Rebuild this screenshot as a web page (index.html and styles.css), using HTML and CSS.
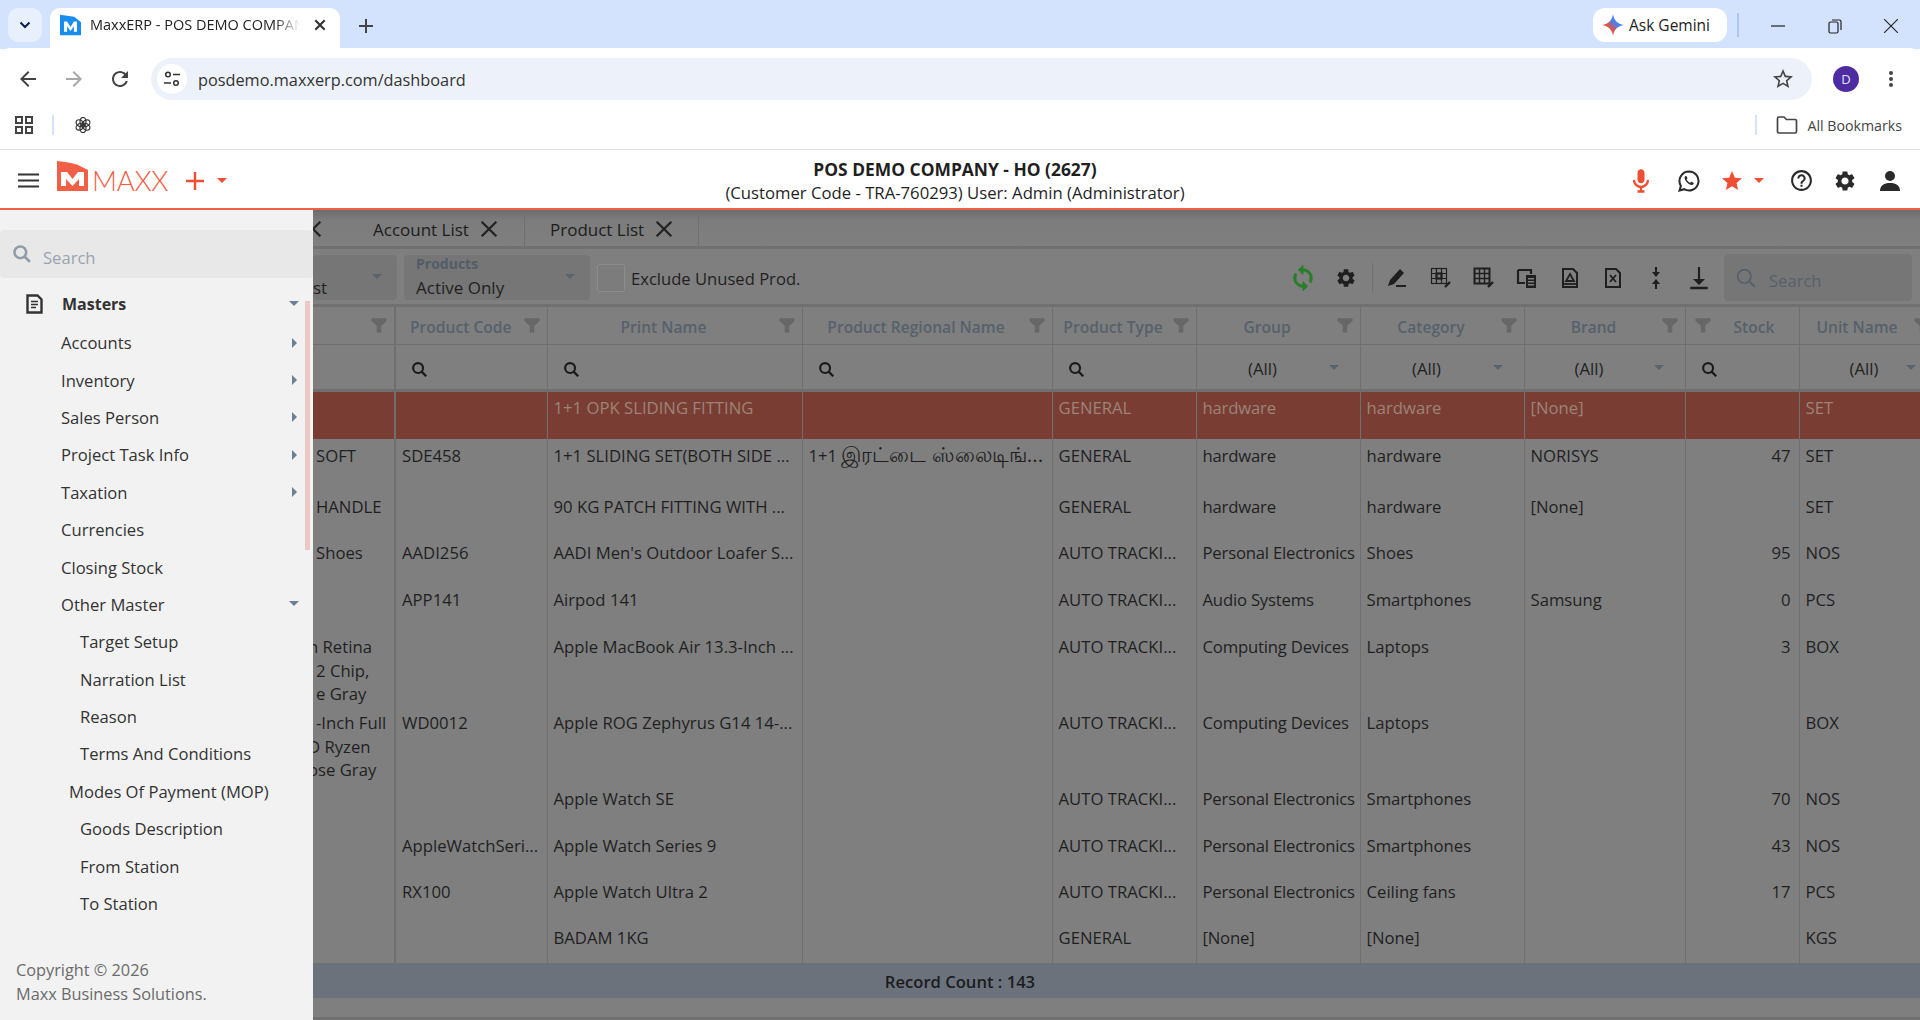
FILE: index.html
```html
<!DOCTYPE html>
<html lang="en">
<head>
    <meta charset="UTF-8">
    <title>MaxxERP - POS DEMO COMPANY</title>
    <link rel="stylesheet" href="styles.css">
</head>
<body>
    <svg class="sprite" xmlns="http://www.w3.org/2000/svg">
        <symbol id="i-filter" viewBox="0 0 24 24"><path d="M2 3h20v4l-7 6v9H9v-9L2 7z"/></symbol>
        <symbol id="i-search" viewBox="0 0 24 24"><circle cx="10" cy="10" r="7" fill="none" stroke="currentColor" stroke-width="3"/><path d="M15 15l6.500 6.500" fill="none" stroke="currentColor" stroke-width="3.200"/></symbol>
        <symbol id="i-search-thin" viewBox="0 0 24 24"><circle cx="10" cy="10" r="8" fill="none" stroke="currentColor" stroke-width="2"/><path d="M16 16l6.500 6.500" fill="none" stroke="currentColor" stroke-width="2.400"/></symbol>
        <symbol id="i-gear" viewBox="0 0 24 24"><path d="M19.140 12.940c.04-.3.06-.61.06-.94 0-.32-.02-.64-.07-.94l2.030-1.580c.18-.14.23-.41.12-.61l-1.920-3.320c-.12-.22-.37-.29-.59-.22l-2.390.96c-.5-.38-1.030-.7-1.620-.94l-.36-2.540c-.04-.24-.24-.41-.48-.41h-3.840c-.24 0-.43.17-.47.41l-.36 2.540c-.59.24-1.130.57-1.620.94l-2.390-.96c-.22-.08-.47 0-.59.22L2.740 8.870c-.12.21-.08.47.12.61l2.030 1.580c-.05.3-.09.63-.09.94s.02.64.07.94l-2.030 1.580c-.18.14-.23.41-.12.61l1.920 3.320c.12.22.37.29.59.22l2.390-.96c.5.38 1.030.7 1.620.94l.36 2.540c.05.24.24.41.48.41h3.840c.24 0 .44-.17.47-.41l.36-2.540c.59-.24 1.130-.56 1.620-.94l2.390.96c.22.08.47 0 .59-.22l1.920-3.320c.12-.22.07-.47-.12-.61l-2.010-1.580zM12 15.600c-1.980 0-3.600-1.620-3.600-3.600s1.620-3.600 3.600-3.600 3.600 1.620 3.600 3.600-1.620 3.600-3.600 3.600z"/></symbol>
        <symbol id="i-star" viewBox="0 0 24 24"><path d="M12 17.270L18.180 21l-1.640-7.030L22 9.240l-7.190-.61L12 2 9.190 8.630 2 9.240l5.460 4.730L5.820 21z"/></symbol>
        <symbol id="i-close" viewBox="0 0 24 24"><path d="M4 4l16 16M20 4L4 20" fill="none" stroke="currentColor" stroke-width="2.400"/></symbol>
    </svg>

    <div class="tab-strip">
        <button class="tab-menu"><svg width="16" height="16" viewBox="0 0 16 16"><path d="M3.500 5.500L8 10l4.500-4.500" fill="none" stroke="#0b1f4d" stroke-width="2"/></svg></button>
        <div class="browser-tab">
            <svg class="favicon" width="21" height="24" viewBox="0 0 31 30"><path d="M0 0l21 3 10 8v19H0z" fill="#1a8cf0"/><path d="M6 25V10h4.500l5 8 5-8H25v15h-4.500v-8l-5 7-5-7v8z" fill="#fff"/></svg>
            <span class="tab-title">MaxxERP - POS DEMO COMPANY - HO</span>
            <svg class="tab-x" width="14" height="14" viewBox="0 0 24 24"><path d="M4 4l16 16M20 4L4 20" fill="none" stroke="#333" stroke-width="3.600"/></svg>
        </div>
        <svg class="new-tab" width="16" height="16" viewBox="0 0 16 16"><path d="M8 1v14M1 8h14" stroke="#444" stroke-width="2"/></svg>
        <div class="strip-gap"></div>
        <div class="gemini">
            <svg width="22" height="24" viewBox="0 0 24 24">
                <defs><linearGradient id="spark" x1="0" y1="1" x2="1" y2="0"><stop offset="0" stop-color="#f2a33a"/><stop offset=".35" stop-color="#e8503f"/><stop offset=".6" stop-color="#4a7ff0"/><stop offset="1" stop-color="#35a5f5"/></linearGradient></defs>
                <path d="M12 0c1 7 5 11 12 12-7 1-11 5-12 12-1-7-5-11-12-12 7-1 11-5 12-12z" fill="url(#spark)"/>
            </svg>
            Ask Gemini
        </div>
        <div class="strip-divider"></div>
        <div class="win-btns">
            <svg width="14" height="14" viewBox="0 0 14 14"><path d="M0 7h14" stroke="#222" stroke-width="1.200"/></svg>
            <svg width="14" height="16" viewBox="0 0 14 16"><rect x="1" y="4" width="9" height="11" rx="1.500" fill="none" stroke="#222" stroke-width="1.200"/><path d="M4 2h7.500a1.500 1.500 0 0 1 1.500 1.500V12" fill="none" stroke="#222" stroke-width="1.200"/></svg>
            <svg width="14" height="14" viewBox="0 0 14 14"><path d="M0 0l14 14M14 0L0 14" stroke="#222" stroke-width="1.100"/></svg>
        </div>
    </div>

    <div class="browser-bar">
        <svg class="nav-btn" width="24" height="24" viewBox="0 0 24 24"><path fill="#444" d="M20 11H7.830l5.590-5.590L12 4l-8 8 8 8 1.410-1.410L7.830 13H20v-2z"/></svg>
        <svg class="nav-btn" width="24" height="24" viewBox="0 0 24 24"><path fill="#a8a8a8" d="M4 11h12.170l-5.590-5.590L12 4l8 8-8 8-1.410-1.410L16.170 13H4v-2z"/></svg>
        <svg class="nav-btn" width="24" height="24" viewBox="0 0 24 24"><path fill="#444" d="M17.650 6.350C16.200 4.900 14.210 4 12 4c-4.420 0-7.990 3.580-7.990 8s3.570 8 7.990 8c3.730 0 6.840-2.550 7.730-6h-2.080c-.82 2.330-3.040 4-5.650 4-3.310 0-6-2.690-6-6s2.690-6 6-6c1.660 0 3.140.69 4.220 1.780L13 11h7V4l-2.350 2.350z"/></svg>
        <div class="omnibox">
            <span class="site-icon"><svg width="18" height="18" viewBox="0 0 18 18"><circle cx="5" cy="4.500" r="2.300" fill="none" stroke="#333" stroke-width="1.500"/><path d="M10 4.500h7M1 13h7" stroke="#333" stroke-width="1.500"/><circle cx="13" cy="13" r="2.300" fill="none" stroke="#333" stroke-width="1.500"/></svg></span>
            <span class="url">posdemo.maxxerp.com/dashboard</span>
            <svg class="omni-star" width="24" height="24" viewBox="0 0 24 24"><path fill="#444" d="M22 9.240l-7.190-.62L12 2 9.190 8.630 2 9.240l5.460 4.730L5.820 21 12 17.270 18.180 21l-1.630-7.030L22 9.240zM12 15.400l-3.760 2.270 1-4.280-3.320-2.880 4.380-.38L12 6.100l1.710 4.040 4.380.38-3.320 2.880 1 4.280L12 15.400z"/></svg>
        </div>
        <span class="avatar">D</span>
        <svg class="kebab" width="6" height="18" viewBox="0 0 6 18"><circle cx="3" cy="3" r="2" fill="#444"/><circle cx="3" cy="9" r="2" fill="#444"/><circle cx="3" cy="15" r="2" fill="#444"/></svg>
    </div>

    <div class="bookmark-bar">
        <svg width="18" height="18" viewBox="0 0 18 18" fill="none" stroke="#444" stroke-width="2"><rect x="1" y="1" width="6" height="6"/><rect x="11" y="1" width="6" height="6"/><rect x="1" y="11" width="6" height="6"/><rect x="11" y="11" width="6" height="6"/></svg>
        <span class="bm-divider"></span>
        <svg class="openai" width="16" height="16" viewBox="0 0 24 24" fill="none" stroke="#333" stroke-width="1.800">
            <ellipse cx="12" cy="7" rx="4.500" ry="6.500"/>
            <ellipse cx="12" cy="7" rx="4.500" ry="6.500" transform="rotate(60 12 12)"/>
            <ellipse cx="12" cy="7" rx="4.500" ry="6.500" transform="rotate(120 12 12)"/>
            <ellipse cx="12" cy="7" rx="4.500" ry="6.500" transform="rotate(180 12 12)"/>
            <ellipse cx="12" cy="7" rx="4.500" ry="6.500" transform="rotate(240 12 12)"/>
            <ellipse cx="12" cy="7" rx="4.500" ry="6.500" transform="rotate(300 12 12)"/>
        </svg>
        <div class="strip-gap"></div>
        <span class="bm-divider"></span>
        <svg class="bm-folder" width="22" height="20" viewBox="0 0 22 20"><path d="M1.500 3.500a1.500 1.500 0 0 1 1.500-1.500h5l2.500 2.500H19a1.500 1.500 0 0 1 1.500 1.500v10.500a1.500 1.500 0 0 1-1.500 1.500H3a1.500 1.500 0 0 1-1.500-1.500z" fill="none" stroke="#444" stroke-width="1.700"/></svg>
        <span class="bm-label">All Bookmarks</span>
    </div>

    <header class="app-header">
        <div class="header-left">
            <svg class="hamburger" width="21" height="15" viewBox="0 0 21 15"><path d="M0 1.500h21M0 7.500h21M0 13.500h21" stroke="#333" stroke-width="2.200"/></svg>
            <svg class="logo-mark" width="31" height="30" viewBox="0 0 31 30"><path d="M0 0c8 1 15 2 20 3.500L31 9v21H0z" fill="#f25f47"/><path d="M4 25V11h6l5.500 7L21 11h6v14h-5v-7l-6.500 7L9 18v7z" fill="#fff"/></svg>
            <span class="logo-text">MAXX</span>
            <svg class="quick-add" width="20" height="20" viewBox="0 0 20 20"><path d="M10 1v18M1 10h18" stroke="#f04e30" stroke-width="2.400"/></svg>
            <span class="caret caret-red"></span>
        </div>
        <div class="header-title">
            <strong>POS DEMO COMPANY - HO (2627)</strong>
            <span>(Customer Code - TRA-760293) User: Admin (Administrator)</span>
        </div>
        <div class="header-right">
            <svg class="h-mic" width="28" height="30" viewBox="0 0 24 24"><path fill="#f04e30" d="M12 14c1.660 0 3-1.340 3-3V5c0-1.660-1.340-3-3-3S9 3.340 9 5v6c0 1.660 1.340 3 3 3zm5.910-3c-.49 0-.9.36-.98.85C16.520 14.200 14.470 16 12 16s-4.520-1.800-4.930-4.150c-.08-.49-.49-.85-.98-.85-.61 0-1.090.54-1 1.140.49 3 2.890 5.350 5.910 5.780V20H9v2h6v-2h-2v-2.080c3.020-.43 5.420-2.780 5.910-5.780.1-.6-.39-1.140-1-1.140z"/></svg>
            <svg class="h-wa" width="24" height="24" viewBox="0 0 24 24"><path d="M12 2.500a9.500 9.500 0 0 0-8.100 14.400L2.500 21.500l4.700-1.300A9.500 9.500 0 1 0 12 2.500z" fill="none" stroke="#2a2a2a" stroke-width="2"/><path fill="#2a2a2a" d="M8.800 7c-.4 0-.9.4-1.100 1-.4 1.100 0 2.800 1.700 4.800 1.800 2.100 3.800 3.200 5.200 3.200 1.100 0 1.900-.7 2.100-1.500.1-.4 0-.7-.2-.8l-2-1c-.3-.1-.5 0-.7.2l-.8 1c-1.100-.4-2.800-1.900-3.400-3.300l.7-.8c.2-.3.2-.5.1-.7l-.9-1.800C9.300 7.100 9.100 7 8.800 7z"/></svg>
            <svg class="h-star" width="24" height="24" fill="#f04e30"><use href="#i-star"/></svg>
            <span class="caret caret-red"></span>
            <svg class="h-help" width="25" height="25" viewBox="0 0 24 24"><path fill="#2a2a2a" d="M11 18h2v-2h-2v2zm1-16C6.480 2 2 6.480 2 12s4.480 10 10 10 10-4.480 10-10S17.520 2 12 2zm0 18c-4.410 0-8-3.590-8-8s3.590-8 8-8 8 3.590 8 8-3.590 8-8 8zm0-14c-2.210 0-4 1.790-4 4h2c0-1.100.9-2 2-2s2 .9 2 2c0 2-3 1.750-3 5h2c0-2.250 3-2.500 3-5 0-2.210-1.790-4-4-4z"/></svg>
            <svg class="h-gear" width="24" height="24" fill="#2a2a2a"><use href="#i-gear"/></svg>
            <svg class="h-user" width="22" height="22" viewBox="0 0 22 22" fill="#2a2a2a"><circle cx="11" cy="6" r="5"/><path d="M1 21c0-5.500 4-8 10-8s10 2.500 10 8z"/></svg>
        </div>
    </header>

    <div class="workspace">
        <aside class="sidebar">
            <div class="side-search">
                <svg width="20" height="20" color="#8f9ba6"><use href="#i-search"/></svg>
                <span>Search</span>
            </div>
            <div class="side-group">
                <svg class="doc-icon" width="17" height="20" viewBox="0 0 17 20"><path d="M1.500 1.500h10l4 4v13h-14z" fill="none" stroke="#333" stroke-width="2.400"/><path d="M5 7.500h7M5 10.500h7M5 13.500h5" stroke="#333" stroke-width="1.700"/></svg>
                Masters
                <span class="caret caret-down"></span>
            </div>
            <ul class="side-menu">
                <li>Accounts <span class="caret caret-right"></span></li>
                <li>Inventory <span class="caret caret-right"></span></li>
                <li>Sales Person <span class="caret caret-right"></span></li>
                <li>Project Task Info <span class="caret caret-right"></span></li>
                <li>Taxation <span class="caret caret-right"></span></li>
                <li>Currencies</li>
                <li>Closing Stock</li>
                <li>Other Master <span class="caret caret-down"></span></li>
                <li class="sub">Target Setup</li>
                <li class="sub">Narration List</li>
                <li class="sub">Reason</li>
                <li class="sub">Terms And Conditions</li>
                <li class="sub mop">Modes Of Payment (MOP)</li>
                <li class="sub">Goods Description</li>
                <li class="sub">From Station</li>
                <li class="sub">To Station</li>
            </ul>
            <div class="side-thumb"></div>
            <div class="copyright">Copyright © 2026<br>Maxx Business Solutions.</div>
        </aside>

        <main class="main">
            <div class="page-tabs">
                <svg class="cut-x" width="22" height="22" color="#222"><use href="#i-close"/></svg>
                <div class="page-tab tab-account">Account List <svg width="22" height="22" color="#222"><use href="#i-close"/></svg></div>
                <div class="page-tab tab-product">Product List <svg width="22" height="22" color="#222"><use href="#i-close"/></svg></div>
            </div>

            <div class="grid-toolbar">
                <div class="drop drop-cut"><span class="drop-value">st</span><span class="caret caret-dim"></span></div>
                <div class="drop drop-products">
                    <label>Products</label>
                    <span class="drop-value">Active Only</span>
                    <span class="caret caret-dim"></span>
                </div>
                <span class="check"></span>
                <span class="check-label">Exclude Unused Prod.</span>

                <div class="tool-icons">
                    <svg class="tool-refresh" viewBox="0 0 24 24"><path fill="#2a7d2a" stroke="#2a7d2a" stroke-width=".7" d="M12 4V1L8 5l4 4V6c3.310 0 6 2.690 6 6 0 1.010-.25 1.970-.7 2.800l1.460 1.460C19.540 15.030 20 13.570 20 12c0-4.420-3.580-8-8-8zm0 14c-3.310 0-6-2.690-6-6 0-1.010.25-1.970.7-2.800L5.240 7.740C4.460 8.970 4 10.430 4 12c0 4.420 3.580 8 8 8v3l4-4-4-4v3z"/></svg>
                    <svg fill="#1f1f1f"><use href="#i-gear"/></svg>
                    <span class="tool-divider"></span>
                    <svg class="tool-pen" viewBox="0 0 22 22"><path fill="#1f1f1f" d="M15 2l4 4-10 11-6 2 2-6zM11 18h10v2H11z"/></svg>
                    <svg viewBox="0 0 22 22" fill="none" stroke="#1f1f1f" stroke-width="1.200"><rect x="1.500" y="1.500" width="15" height="15"/><path d="M6.500 1.500v15M11.500 1.500v15M1.500 6.500h15M1.500 11.500h15"/><rect x="6.500" y="6.500" width="5" height="5" stroke-width="2.200"/><path d="M15 20l5-5" stroke-width="2.400"/></svg>
                    <svg viewBox="0 0 22 22" fill="none" stroke="#1f1f1f" stroke-width="1.400"><rect x="1.500" y="1.500" width="15" height="15" stroke-width="2"/><path d="M6.500 1.500v15M11.500 1.500v15M1.500 6.500h15M1.500 11.500h15"/><path d="M15 20l5-5" stroke-width="2.400"/></svg>
                    <svg viewBox="0 0 22 22"><path d="M2 3h13v4M9 16H2V3" fill="none" stroke="#1f1f1f" stroke-width="2.200"/><path fill="#1f1f1f" d="M10 8h10v13H10zM12 11v1.500h6V11zm0 3v1.500h6V14zm0 3v1.500h6V17z" fill-rule="evenodd"/></svg>
                    <svg viewBox="0 0 22 22"><path d="M4 2h10l4 4v14H4z" fill="none" stroke="#1f1f1f" stroke-width="2"/><path d="M11 7l4 7H7z" fill="none" stroke="#1f1f1f" stroke-width="1.800"/><path d="M4 17h14" stroke="#1f1f1f" stroke-width="1.800"/></svg>
                    <svg viewBox="0 0 22 22"><path d="M4 2h10l4 4v14H4z" fill="none" stroke="#1f1f1f" stroke-width="2"/><path d="M8 8l6 7M14 8l-6 7" stroke="#1f1f1f" stroke-width="1.800"/></svg>
                    <svg viewBox="0 0 14 24"><path fill="#1f1f1f" d="M6 1h2v5h3l-4 5-4-5h3zM7 13l4 5H8v5H6v-5H3z"/></svg>
                    <svg viewBox="0 0 20 22"><path fill="#1f1f1f" d="M9 1h2v11h4.500L10 17.500 4.500 12H9zM2 19h16v2.200H2z"/></svg>
                </div>
                <div class="tool-search">
                    <svg width="20" height="20" color="#56606a"><use href="#i-search-thin"/></svg>
                    <span>Search</span>
                </div>
            </div>

            <div class="grid-wrap">
                <table class="grid">
                    <colgroup>
                        <col class="c-name"><col class="c-code"><col class="c-print"><col class="c-regional"><col class="c-type">
                        <col class="c-group"><col class="c-cat"><col class="c-brand"><col class="c-stock"><col class="c-unit">
                    </colgroup>
                    <thead>
                        <tr class="head-row">
                            <th><svg class="th-filter"><use href="#i-filter"/></svg></th>
                            <th class="th-left">Product Code<svg class="th-filter"><use href="#i-filter"/></svg></th>
                            <th>Print Name<svg class="th-filter"><use href="#i-filter"/></svg></th>
                            <th>Product Regional Name<svg class="th-filter"><use href="#i-filter"/></svg></th>
                            <th>Product Type<svg class="th-filter"><use href="#i-filter"/></svg></th>
                            <th>Group<svg class="th-filter"><use href="#i-filter"/></svg></th>
                            <th>Category<svg class="th-filter"><use href="#i-filter"/></svg></th>
                            <th>Brand<svg class="th-filter"><use href="#i-filter"/></svg></th>
                            <th class="th-stock"><svg class="th-filter th-filter-left"><use href="#i-filter"/></svg>Stock</th>
                            <th>Unit Name<svg class="th-filter"><use href="#i-filter"/></svg></th>
                        </tr>
                        <tr class="filter-row">
                            <td></td>
                            <td><svg class="f-search"><use href="#i-search"/></svg></td>
                            <td><svg class="f-search"><use href="#i-search"/></svg></td>
                            <td><svg class="f-search"><use href="#i-search"/></svg></td>
                            <td><svg class="f-search"><use href="#i-search"/></svg></td>
                            <td class="f-all">(All)<span class="caret caret-dim"></span></td>
                            <td class="f-all">(All)<span class="caret caret-dim"></span></td>
                            <td class="f-all">(All)<span class="caret caret-dim"></span></td>
                            <td><svg class="f-search"><use href="#i-search"/></svg></td>
                            <td class="f-all f-unit">(All)<span class="caret caret-dim"></span></td>
                        </tr>
                    </thead>
                    <tbody>
                        <tr class="r49 selected"><td></td><td></td><td>1+1 OPK SLIDING FITTING</td><td></td><td>GENERAL</td><td>hardware</td><td>hardware</td><td>[None]</td><td></td><td>SET</td></tr>
                        <tr class="r51"><td>SOFT</td><td>SDE458</td><td>1+1 SLIDING SET(BOTH SIDE ...</td><td>1+1 <span class="tamil">இரட்டை ஸ்லைடிங்...</span></td><td>GENERAL</td><td>hardware</td><td>hardware</td><td>NORISYS</td><td class="num">47</td><td>SET</td></tr>
                        <tr class="r46"><td>HANDLE</td><td></td><td>90 KG PATCH FITTING WITH ...</td><td></td><td>GENERAL</td><td>hardware</td><td>hardware</td><td>[None]</td><td></td><td>SET</td></tr>
                        <tr class="r47"><td>Shoes</td><td>AADI256</td><td>AADI Men's Outdoor Loafer S...</td><td></td><td>AUTO TRACKI...</td><td>Personal Electronics</td><td>Shoes</td><td></td><td class="num">95</td><td>NOS</td></tr>
                        <tr class="r47"><td></td><td>APP141</td><td>Airpod 141</td><td></td><td>AUTO TRACKI...</td><td>Audio Systems</td><td>Smartphones</td><td>Samsung</td><td class="num">0</td><td>PCS</td></tr>
                        <tr class="r76"><td class="wrap-name"><span class="cut">n Retina</span><br>2 Chip,<br>e Gray</td><td></td><td>Apple MacBook Air 13.3-Inch ...</td><td></td><td>AUTO TRACKI...</td><td>Computing Devices</td><td>Laptops</td><td></td><td class="num">3</td><td>BOX</td></tr>
                        <tr class="r75"><td class="wrap-name">-Inch Full<br><span class="cut">D Ryzen</span><br><span class="cut">ose Gray</span></td><td>WD0012</td><td>Apple ROG Zephyrus G14 14-...</td><td></td><td>AUTO TRACKI...</td><td>Computing Devices</td><td>Laptops</td><td></td><td></td><td>BOX</td></tr>
                        <tr class="r47"><td></td><td></td><td>Apple Watch SE</td><td></td><td>AUTO TRACKI...</td><td>Personal Electronics</td><td>Smartphones</td><td></td><td class="num">70</td><td>NOS</td></tr>
                        <tr class="r46"><td></td><td>AppleWatchSeri...</td><td>Apple Watch Series 9</td><td></td><td>AUTO TRACKI...</td><td>Personal Electronics</td><td>Smartphones</td><td></td><td class="num">43</td><td>NOS</td></tr>
                        <tr class="r46"><td></td><td>RX100</td><td>Apple Watch Ultra 2</td><td></td><td>AUTO TRACKI...</td><td>Personal Electronics</td><td>Ceiling fans</td><td></td><td class="num">17</td><td>PCS</td></tr>
                        <tr class="r42"><td></td><td></td><td>BADAM 1KG</td><td></td><td>GENERAL</td><td>[None]</td><td>[None]</td><td></td><td></td><td>KGS</td></tr>
                    </tbody>
                </table>
            </div>

            <div class="record-count">Record Count : 143</div>
            <div class="pager-strip"></div>
        </main>
    </div>
</body>
</html>
```

FILE: styles.css
```css
* {
    margin: 0;
    padding: 0;
    box-sizing: border-box;
}

html, body {
    height: 100vh;
    overflow: hidden;
}

body {
    font-family: "Open Sans", "Noto Sans", sans-serif;
    font-size: 15px;
    color: #1f1f1f;
    background: #fff;
    display: flex;
    flex-direction: column;
}

svg {
    flex: none;
}

.sprite {
    display: none;
}

.caret {
    display: inline-block;
    width: 0;
    height: 0;
    border-left: 5px solid transparent;
    border-right: 5px solid transparent;
    border-top: 5px solid #6b7f95;
}

.caret-red {
    border-top-color: #f04e30;
}

.caret-dim {
    border-top-color: #5a646e;
}

/* browser chrome */
.tab-strip {
    height: 49px;
    background: #d3e3fd;
    display: flex;
    align-items: flex-start;
    padding: 8px 0 0 8px;
}

.tab-menu {
    width: 34px;
    height: 34px;
    background: #e8f0fe;
    border: 0;
    border-radius: 10px;
    display: flex;
    align-items: center;
    justify-content: center;
}

.browser-tab {
    width: 290px;
    height: 41px;
    margin-left: 8px;
    background: #fff;
    border-radius: 10px 10px 0 0;
    display: flex;
    align-items: center;
    padding: 0 0 8px 10px;
    font-size: 14.5px;
    color: #222;
}

.tab-title {
    width: 210px;
    margin-left: 9px;
    white-space: nowrap;
    overflow: hidden;
    -webkit-mask-image: linear-gradient(90deg, #000 88%, transparent);
    mask-image: linear-gradient(90deg, #000 88%, transparent);
}

.tab-x {
    margin-left: 13px;
}

.new-tab {
    margin: 10px 0 0 18px;
}

.strip-gap {
    flex: 1;
}

.gemini {
    width: 134px;
    height: 34px;
    background: #fff;
    border-radius: 12px;
    display: flex;
    align-items: center;
    gap: 5px;
    padding-left: 9px;
    font-size: 15.5px;
    font-weight: 500;
    color: #222;
}

.strip-divider {
    width: 2px;
    height: 24px;
    margin: 5px 0 0 10px;
    background: #a9c7fa;
}

.win-btns {
    width: 181px;
    display: flex;
    align-items: center;
    justify-content: space-between;
    padding: 10px 22px 0 32px;
}

.browser-bar {
    height: 56px;
    background: #fff;
    border-radius: 10px 10px 0 0;
    display: flex;
    align-items: center;
    padding: 6px 0 0 16px;
    margin-top: -1px;
}

.nav-btn {
    margin-right: 22px;
}

.omnibox {
    width: 1661px;
    height: 42px;
    margin-left: -3px;
    background: #edf2fa;
    border-radius: 21px;
    display: flex;
    align-items: center;
    padding: 0 17px 0 6px;
}

.site-icon {
    width: 30px;
    height: 30px;
    background: #fff;
    border-radius: 50%;
    display: flex;
    align-items: center;
    justify-content: center;
}

.url {
    flex: 1;
    margin: 1px 0 0 11px;
    font-size: 16.3px;
    color: #333;
}

.avatar {
    width: 26px;
    height: 26px;
    margin-left: 21px;
    background: #4c2ca0;
    border-radius: 50%;
    color: #e6e0f5;
    font-size: 13px;
    display: flex;
    align-items: center;
    justify-content: center;
}

.kebab {
    margin-left: 29px;
}

.bookmark-bar {
    height: 46px;
    background: #fff;
    border-bottom: 1px solid #e0e0e0;
    display: flex;
    align-items: center;
    padding: 0 18px 3px 15px;
}

.bm-divider {
    width: 2px;
    height: 20px;
    margin-left: 19px;
    background: #d3e3fd;
}

.openai {
    margin-left: 21px;
}

.bm-folder {
    margin-left: 19px;
}

.bm-label {
    margin-left: 9px;
    font-size: 14.2px;
    color: #444;
}

/* app header */
.app-header {
    height: 60px;
    background: #fff;
    border-bottom: 2px solid #f25f47;
    display: flex;
    align-items: center;
    padding-top: 3px;
}

.header-left {
    width: 400px;
    display: flex;
    align-items: center;
    padding-left: 18px;
}

.logo-mark {
    margin: -9px 0 0 18px;
}

.logo-text {
    margin-left: 4px;
    font-family: "Lato", sans-serif;
    font-weight: 300;
    font-size: 27.5px;
    color: #f25f47;
    letter-spacing: -0.3px;
}

.quick-add {
    margin-left: 17px;
}

.header-left .caret {
    margin-left: 12px;
}

.header-title {
    width: 1110px;
    text-align: center;
    line-height: 24px;
    font-size: 16.7px;
}

.header-title strong,
.header-title span {
    display: block;
}

.header-title strong {
    font-size: 17.4px;
}

.header-right {
    flex: 1;
    display: flex;
    align-items: center;
    padding-left: 117px;
}

.h-wa { margin-left: 22px; }
.h-star { margin-left: 19px; }
.header-right .caret { margin-left: 10px; }
.h-help { margin-left: 25px; }
.h-gear { margin-left: 19px; }
.h-user { margin-left: 22px; }

/* workspace */
.workspace {
    flex: 1;
    display: flex;
    min-height: 0;
}

.sidebar {
    width: 313px;
    flex: none;
    background: #f2f2f2;
    position: relative;
    display: flex;
    flex-direction: column;
    padding-top: 20px;
    color: #333;
    font-size: 16.6px;
}

.side-search {
    height: 48px;
    background: #e8e8e8;
    border-radius: 4px;
    display: flex;
    align-items: center;
    gap: 11px;
    padding-left: 12px;
    color: #98a4ae;
}

.side-search span {
    margin-top: 6px;
}

.side-group {
    height: 37px;
    margin: 7px 0 2px;
    display: flex;
    align-items: center;
    padding-left: 26px;
    font-weight: 700;
    font-size: 16px;
    position: relative;
}

.doc-icon {
    margin-right: 19px;
}

.side-menu {
    list-style: none;
}

.side-menu li {
    height: 37.4px;
    display: flex;
    align-items: center;
    padding-left: 61px;
    position: relative;
}

.side-menu li.sub {
    padding-left: 80px;
}

.side-menu li.mop {
    padding-left: 69px;
}

.caret-down,
.caret-right {
    position: absolute;
    right: 14px;
    top: 50%;
    margin-top: -3px;
}

.caret-right {
    right: 16px;
    margin-top: -5px;
    border-top: 5px solid transparent;
    border-bottom: 5px solid transparent;
    border-left: 5px solid #6b7f95;
    border-right: 0;
}

.side-thumb {
    position: absolute;
    left: 305px;
    top: 91px;
    width: 5px;
    height: 249px;
    background: #eac8c4;
}

.copyright {
    margin-top: auto;
    padding: 0 0 14px 16px;
    line-height: 24px;
    font-size: 16.3px;
    color: #6a6a6a;
}

/* dimmed page behind the drawer */
.main {
    flex: 1;
    min-width: 0;
    display: flex;
    flex-direction: column;
    overflow: hidden;
    background: #7f7f7f;
}

.page-tabs {
    height: 39px;
    flex: none;
    display: flex;
    border-bottom: 3px solid #707070;
    background: linear-gradient(#6d6d6d, #7c7c7c 10px, #7f7f7f);
    position: relative;
    color: #1c1c1c;
    font-size: 17px;
    font-weight: 500;
}

.cut-x {
    position: absolute;
    left: -11px;
    top: 8px;
}

.page-tab {
    height: 36px;
    display: flex;
    align-items: center;
    gap: 9px;
    padding-top: 2px;
    border-right: 1px solid #707070;
}

.tab-account {
    width: 212px;
    padding-left: 60px;
}

.tab-product {
    width: 174px;
    padding-left: 25px;
}

.grid-toolbar {
    height: 58px;
    flex: none;
    display: flex;
    align-items: center;
    border-bottom: 3px solid #707070;
    padding-top: 2px;
}

.drop {
    height: 45px;
    background: #767676;
    border-radius: 4px;
    position: relative;
}

.drop .caret {
    position: absolute;
    right: 15px;
    top: 19px;
}

.drop-value {
    position: absolute;
    left: 12px;
    bottom: 1px;
    line-height: 22px;
    font-size: 17px;
    color: #1f1f1f;
}

.drop-cut {
    width: 84px;
}

.drop-cut .drop-value {
    left: 0;
}

.drop-products {
    width: 186px;
    margin-left: 7px;
}

.drop-products label {
    position: absolute;
    left: 12px;
    top: -1px;
    font-size: 14px;
    font-weight: 700;
    color: #525d68;
}

.check {
    width: 28px;
    height: 28px;
    margin-left: 7px;
    border: 1px solid #8c8c8c;
    background: #7c7c7c;
    border-radius: 2px;
}

.check-label {
    margin: 2px 0 0 6px;
    font-size: 16.6px;
    color: #1f1f1f;
}

.tool-icons {
    margin-left: auto;
    display: flex;
    align-items: center;
    gap: 21px;
}

.tool-icons svg {
    width: 22px;
    height: 24px;
}

.tool-icons .tool-refresh {
    width: 28px;
    height: 28px;
    margin: 0 -3px;
}

.tool-icons .tool-pen {
    margin-right: 2px;
}

.tool-divider {
    width: 1px;
    height: 30px;
    background: #707070;
    margin: 0 -9px 0 -6px;
}

.tool-search {
    width: 188px;
    height: 47px;
    margin: 0 8px 0 14px;
    background: #767676;
    border-radius: 4px;
    display: flex;
    align-items: center;
    gap: 13px;
    padding-left: 12px;
    color: #56606a;
    font-size: 16.6px;
}

.tool-search span {
    margin-top: 5px;
}

.grid-wrap {
    flex: 1;
    min-height: 0;
    overflow: hidden;
}

.grid {
    width: 1624px;
    table-layout: fixed;
    border-collapse: collapse;
    font-size: 16.7px;
}

.c-name { width: 82px; }
.c-code { width: 152px; }
.c-print { width: 255px; }
.c-regional { width: 250px; }
.c-type { width: 144px; }
.c-group { width: 164px; }
.c-cat { width: 164px; }
.c-brand { width: 161px; }
.c-stock { width: 114px; }
.c-unit { width: 138px; }

.grid th,
.grid td {
    border-right: 1px solid #6f6f6f;
    white-space: nowrap;
    overflow: hidden;
    position: relative;
}

.grid th:first-child,
.grid td:first-child {
    border-right-width: 2px;
}

.head-row th {
    height: 37px;
    padding: 4px 22px 0 0;
    font-size: 15.6px;
    font-weight: 600;
    color: #56616c;
    text-align: center;
    border-bottom: 1px solid #6f6f6f;
}

.head-row .th-left {
    text-align: left;
    padding-left: 14px;
}

.head-row .th-stock {
    padding: 4px 0 0 24px;
}

.th-filter {
    position: absolute;
    right: 6px;
    top: 9px;
    width: 18px;
    height: 18px;
    fill: #676767;
}

.th-filter-left {
    right: auto;
    left: 8px;
}

.filter-row td {
    height: 46px;
    border-bottom: 3px solid #6f6f6f;
    padding: 5px 15px 0;
    vertical-align: middle;
}

.f-search {
    width: 17px;
    height: 17px;
    display: block;
    color: #1a1a1a;
}

.grid .f-all {
    text-align: center;
    padding: 3px 31px 0 0;
    font-size: 16.7px;
}

.grid .f-unit {
    padding-right: 8px;
}

.f-all .caret {
    position: absolute;
    right: 21px;
    top: 20px;
}

tbody td {
    vertical-align: top;
    padding: 5px 6px 0;
    line-height: 24px;
    color: #1f1f1f;
}

tbody td:nth-child(6) {
    letter-spacing: -0.2px;
}

tbody td.num {
    text-align: right;
    padding-right: 8px;
}

tbody td:first-child {
    padding-left: 3px;
}

/* three wrapped lines must stay inside the fixed row height */
tbody .wrap-name {
    line-height: 23.5px;
}

.cut {
    margin-left: -8px;
}

.tamil {
    font-size: 20.7px;
    line-height: 1;
}

.r42 { height: 42px; }
.r46 { height: 46px; }
.r47 { height: 47px; }
.r49 { height: 49px; }
.r51 { height: 51px; }
.r75 { height: 75px; }
.r76 { height: 76px; }

.selected td {
    padding-top: 4px;
    background: #7a3d33;
    color: #9b8479;
}

.record-count {
    height: 35px;
    flex: none;
    background: #6b727c;
    display: flex;
    align-items: center;
    justify-content: center;
    padding: 2px 313px 0 0;
    font-weight: 600;
    font-size: 16.6px;
    color: #1c1c1c;
}

.pager-strip {
    height: 22px;
    flex: none;
    border-bottom: 3px solid #707070;
}
```
